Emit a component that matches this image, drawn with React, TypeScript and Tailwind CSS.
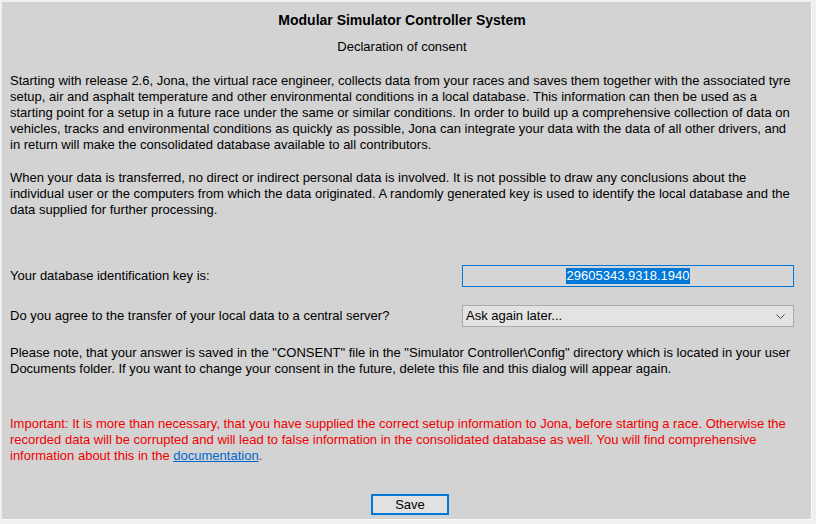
import React from "react";

const font = { fontFamily: '"Liberation Sans", Arial, sans-serif' };

function Lines({ lines, className }: { lines: React.ReactNode[]; className?: string }) {
  return (
    <div className={"text-[13px] leading-[16px] whitespace-nowrap " + (className ?? "")}>
      {lines.map((l, i) => (
        <div key={i}>{l}</div>
      ))}
    </div>
  );
}

export default function App() {
  return (
    <div className="w-[816px] h-[524px] bg-[#f0f0f0] pt-[2px] pl-[2px] pr-[4px] pb-[4px]" style={font}>
      <div className="h-full bg-[#d3d3d3] border-r border-b border-[#fafafa] text-black flex flex-col pl-[8px] pr-[17px]">
        <div className="mt-[10px] text-center text-[14px] leading-[16px] font-bold">
          Modular Simulator Controller System
        </div>
        <div className="mt-[11px] text-center text-[13px] leading-[16px]">Declaration of consent</div>

        <Lines
          className="mt-[18px]"
          lines={[
            "Starting with release 2.6, Jona, the virtual race engineer, collects data from your races and saves them together with the associated tyre",
            "setup, air and asphalt temperature and other environmental conditions in a local database. This information can then be used as a",
            "starting point for a setup in a future race under the same or similar conditions. In order to build up a comprehensive collection of data on",
            "vehicles, tracks and environmental conditions as quickly as possible, Jona can integrate your data with the data of all other drivers, and",
            "in return will make the consolidated database available to all contributors.",
          ]}
        />
        <Lines
          className="mt-[17px]"
          lines={[
            "When your data is transferred, no direct or indirect personal data is involved. It is not possible to draw any conclusions about the",
            "individual user or the computers from which the data originated. A randomly generated key is used to identify the local database and the",
            "data supplied for further processing.",
          ]}
        />

        <div className="mt-[47px] flex items-center justify-between">
          <span className="text-[13px] leading-[16px]">Your database identification key is:</span>
          <div className="w-[332px] h-[22px] border border-[#0078d7] bg-[#d6d6d6] flex items-center justify-center">
            <span className="bg-[#0078d7] text-white text-[13px] leading-[16px] px-[1px]">29605343.9318.1940</span>
          </div>
        </div>

        <div className="mt-[18px] flex items-center justify-between">
          <span className="text-[13px] leading-[16px]">Do you agree to the transfer of your local data to a central server?</span>
          <div className="w-[332px] h-[22px] border border-[#acacac] bg-[#e3e3e3] flex items-center justify-between pl-[3px] pr-[8px]">
            <span className="text-[13px] leading-[16px]">Ask again later...</span>
            <svg width="9" height="5" viewBox="0 0 9 5" fill="none" stroke="#444" strokeWidth="1">
              <path d="M0.5 0.5 L4.5 4.5 L8.5 0.5" />
            </svg>
          </div>
        </div>

        <Lines
          className="mt-[18px]"
          lines={[
            'Please note, that your answer is saved in the "CONSENT" file in the "Simulator Controller\\Config" directory which is located in your user',
            "Documents folder. If you want to change your consent in the future, delete this file and this dialog will appear again.",
          ]}
        />

        <Lines
          className="mt-[39px] text-[#f00000]"
          lines={[
            "Important: It is more than necessary, that you have supplied the correct setup information to Jona, before starting a race. Otherwise the",
            "recorded data will be corrupted and will lead to false information in the consolidated database as well. You will find comprehensive",
            <>
              information about this in the{" "}
              <a className="text-[#0066cc] underline" href="#">
                documentation
              </a>
              .
            </>,
          ]}
        />

        <div className="mt-[30px] flex justify-center pl-[16px]">
          <button className="w-[78px] h-[21px] border-2 border-[#0078d7] bg-[#e1e1e1] text-[13px] leading-[16px] text-black">
            Save
          </button>
        </div>
      </div>
    </div>
  );
}
